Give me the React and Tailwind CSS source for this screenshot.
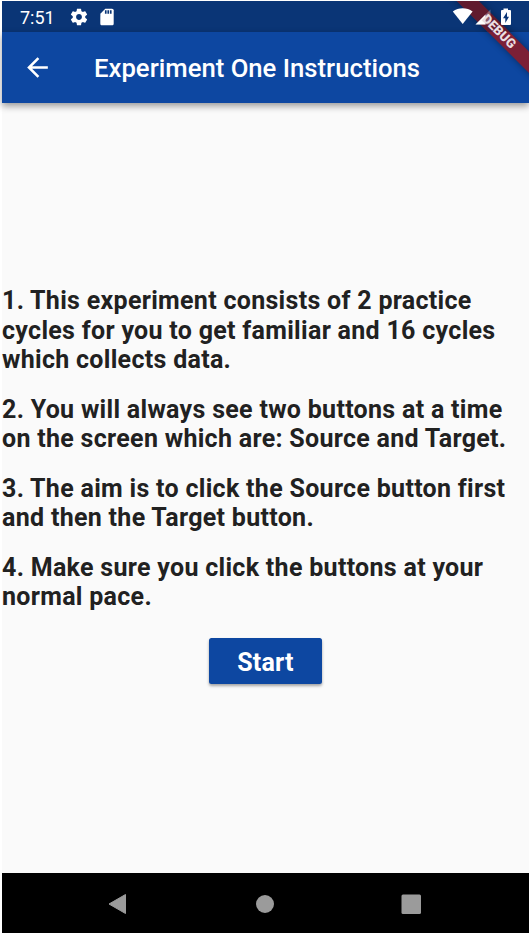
const LINES = [
  ['1. This experiment consists of 2 practice', 'cycles for you to get familiar and 16 cycles', 'which collects data.'],
  ['2. You will always see two buttons at a time', 'on the screen which are: Source and Target.'],
  ['3. The aim is to click the Source button first', 'and then the Target button.'],
  ['4. Make sure you click the buttons at your', 'normal pace.'],
];

function StatusBar() {
  return (
    <div className="flex h-[31px] shrink-0 items-center bg-[#0a3576] text-white">
      <span className="ml-[18px] w-[48.500px] pt-[2px] text-[18px] leading-none font-normal">7:51</span>
      <svg className="h-5 w-5" viewBox="0 0 24 24" fill="currentColor">
        <path d="M19.43 12.98c.04-.32.07-.64.07-.98s-.03-.66-.07-.98l2.11-1.65c.19-.15.24-.42.12-.64l-2-3.46c-.12-.22-.39-.3-.61-.22l-2.49 1c-.52-.4-1.08-.73-1.69-.98l-.38-2.65A.488.488 0 0 0 14 2h-4c-.25 0-.46.18-.49.42l-.38 2.65c-.61.25-1.17.59-1.69.98l-2.49-1c-.23-.09-.49 0-.61.22l-2 3.46c-.13.22-.07.49.12.64l2.11 1.65c-.04.32-.07.65-.07.98s.03.66.07.98l-2.11 1.65c-.19.15-.24.42-.12.64l2 3.46c.12.22.39.3.61.22l2.49-1c.52.4 1.08.73 1.69.98l.38 2.65c.03.24.24.42.49.42h4c.25 0 .46-.18.49-.42l.38-2.65c.61-.25 1.17-.59 1.69-.98l2.49 1c.23.09.49 0 .61-.22l2-3.46c.12-.22.07-.49-.12-.64l-2.11-1.65zM12 15.5c-1.93 0-3.5-1.57-3.5-3.5s1.57-3.5 3.5-3.5 3.5 1.57 3.5 3.5-1.57 3.5-3.5 3.5z" />
      </svg>
      <svg className="ml-[8px] h-5 w-5" viewBox="0 0 24 24" fill="currentColor">
        <path d="M18 2h-8L4.02 8 4 20c0 1.100.9 2 2 2h12c1.100 0 2-.9 2-2V4c0-1.100-.9-2-2-2z" />
        <path d="M9.500 4h2v4h-2zM12.500 4h2v4h-2zM15.500 4h2v4h-2z" fill="#0a3576" />
      </svg>
    </div>
  );
}

function StatusIcons() {
  return (
    <svg className="absolute top-0 right-0 z-20 h-[104px] w-[104px]" viewBox="425 0 104 104">
      <defs>
        <filter id="ribbonShadow" x="-20%" y="-20%" width="140%" height="140%">
          <feGaussianBlur stdDeviation="3.500" />
        </filter>
        <clipPath id="screen"><rect x="425" y="1" width="104" height="103" /></clipPath>
      </defs>
      <g clipPath="url(#screen)">
        <path d="M446 -10L468 -10L539 61L539 83Z" fill="#000" opacity=".4" filter="url(#ribbonShadow)" />
        <path d="M446 -10H467.600L539 61.400V83Z" fill="#7c2036" />
        <path d="M446 -10H467.600L509.600 32H488Z" fill="#611b2e" />
      </g>
      <path d="M462.700 24L452.800 11.500Q457.200 8.200 462.700 8.200T472.600 11.500Z" fill="#fff" />
      <path d="M475.500 24.500L490.500 9.500V24.500Z" fill="#fff" opacity=".3" />
      <path d="M475.500 24.500L485.500 14.500V24.500Z" fill="#fff" />
      <path d="M503.500 8.500H508V10H510Q511 10 511 11V24Q511 25 510 25H502Q501 25 501 24V11Q501 10 502 10H503.500Z" fill="#fff" />
      <path d="M507 12L503 18.200H505.300V23L509 16.800H507Z" fill="#0a3576" />
      <text
        transform="translate(499.200 31.200) rotate(45)"
        textAnchor="middle"
        y="4.600"
        fill="#eadfe2"
        className="font-[Roboto,sans-serif] text-[13px] font-black"
      >
        DEBUG
      </text>
    </svg>
  );
}

function AppBar() {
  return (
    <header className="z-10 flex h-[71px] shrink-0 items-center bg-[#0d47a1] text-white shadow-[0_3px_7px_rgba(0,0,0,0.4)]">
      <svg className="ml-[20px] h-[31px] w-[31px]" viewBox="0 0 24 24" fill="currentColor">
        <path d="M20 11H7.830l5.590-5.590L12 4l-8 8 8 8 1.410-1.410L7.830 13H20v-2z" />
      </svg>
      <h1 className="ml-[41px] pt-[2px] text-[25.700px] leading-none font-medium whitespace-nowrap">
        Experiment One Instructions
      </h1>
    </header>
  );
}

function NavBar() {
  return (
    <nav className="flex h-[60px] shrink-0 items-center bg-black text-[#9b9b9b]">
      <svg className="h-full w-full" viewBox="2 873 527 60" fill="currentColor">
        <path d="M109 904L125.500 894.500V913.500Z" stroke="currentColor" strokeLinejoin="round" />
        <circle cx="265" cy="904" r="9" />
        <rect x="401.500" y="894.500" width="19.500" height="19.500" rx="1.500" />
      </svg>
    </nav>
  );
}

export default function App() {
  return (
    <div className="relative flex h-[933px] w-[529px] flex-col overflow-hidden bg-white pt-px pl-[2px] font-[Roboto,sans-serif]">
      <StatusBar />
      <AppBar />
      <main className="flex grow flex-col items-center bg-[#fafafa] pt-[183.300px]">
        <div className="flex w-full flex-col gap-[20.300px] text-[25px] leading-[29.350px] font-bold tracking-[0.300px] text-[#212121]">
          {LINES.map((paragraph) => (
            <p key={paragraph[0]}>
              {paragraph.map((line) => (
                <span key={line} className="block whitespace-nowrap">{line}</span>
              ))}
            </p>
          ))}
        </div>
        <button className="mt-[27px] h-[46px] w-[113px] rounded-[2.500px] bg-[#0d47a1] pt-[2px] text-[25px] leading-none font-bold tracking-[0.200px] text-white shadow-[0_2px_3px_rgba(0,0,0,0.35)]">
          Start
        </button>
      </main>
      <NavBar />
      <StatusIcons />
    </div>
  );
}
